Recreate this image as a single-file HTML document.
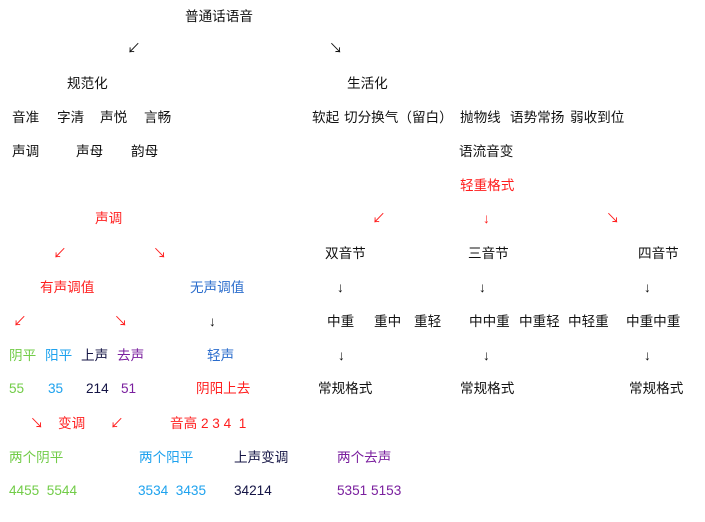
<!DOCTYPE html>
<html><head><meta charset="utf-8"><style>
body{margin:0;width:705px;height:522px;background:#fff;position:relative;overflow:hidden;font-family:"Liberation Sans","Noto Sans CJK SC",sans-serif;font-size:13.6px;color:#111;}
div{position:absolute;white-space:pre;line-height:16px;}
.r{color:#ff1e1e}.g{color:#72cc48}.b{color:#1ea2ee}.n{color:#141444}.p{color:#7a1f9e}.bl{color:#2a6ccc}
</style></head><body>
<div style="left:185px;top:9px">普通话语音</div>
<div style="left:127px;top:41px">↙</div><div style="left:329px;top:41px">↘</div>
<div style="left:67px;top:76px">规范化</div><div style="left:347px;top:76px">生活化</div>
<div style="left:12px;top:110px">音准</div><div style="left:57px;top:110px">字清</div><div style="left:100px;top:110px">声悦</div><div style="left:144px;top:110px">言畅</div>
<div style="left:312px;top:110px">软起</div><div style="left:344px;top:110px">切分换气（留白）</div><div style="left:460px;top:110px">抛物线</div><div style="left:510px;top:110px">语势常扬</div><div style="left:570px;top:110px">弱收到位</div>
<div style="left:12px;top:144px">声调</div><div style="left:76px;top:144px">声母</div><div style="left:131px;top:144px">韵母</div>
<div style="left:459px;top:144px">语流音变</div>
<div class="r" style="left:460px;top:178px">轻重格式</div>
<div class="r" style="left:95px;top:211px">声调</div>
<div class="r" style="left:372px;top:211px">↙</div><div class="r" style="left:483px;top:211px">↓</div><div class="r" style="left:606px;top:211px">↘</div>
<div class="r" style="left:53px;top:246px">↙</div><div class="r" style="left:153px;top:246px">↘</div>
<div style="left:325px;top:246px">双音节</div><div style="left:468px;top:246px">三音节</div><div style="left:638px;top:246px">四音节</div>
<div class="r" style="left:40px;top:280px">有声调值</div><div class="bl" style="left:190px;top:280px">无声调值</div>
<div style="left:337px;top:280px">↓</div><div style="left:479px;top:280px">↓</div><div style="left:644px;top:280px">↓</div>
<div class="r" style="left:13px;top:314px">↙</div><div class="r" style="left:114px;top:314px">↘</div><div style="left:209px;top:314px">↓</div>
<div style="left:327px;top:314px">中重</div><div style="left:374px;top:314px">重中</div><div style="left:414px;top:314px">重轻</div>
<div style="left:469px;top:314px">中中重</div><div style="left:519px;top:314px">中重轻</div><div style="left:568px;top:314px">中轻重</div><div style="left:626px;top:314px">中重中重</div>
<div class="g" style="left:9px;top:348px">阴平</div><div class="b" style="left:45px;top:348px">阳平</div><div class="n" style="left:81px;top:348px">上声</div><div class="p" style="left:117px;top:348px">去声</div>
<div class="bl" style="left:207px;top:348px">轻声</div>
<div style="left:338px;top:348px">↓</div><div style="left:483px;top:348px">↓</div><div style="left:644px;top:348px">↓</div>
<div class="g" style="left:9px;top:381px">55</div><div class="b" style="left:48px;top:381px">35</div><div class="n" style="left:86px;top:381px">214</div><div class="p" style="left:121px;top:381px">51</div>
<div class="r" style="left:196px;top:381px">阴阳上去</div>
<div style="left:318px;top:381px">常规格式</div><div style="left:460px;top:381px">常规格式</div><div style="left:629px;top:381px">常规格式</div>
<div class="r" style="left:30px;top:416px">↘</div><div class="r" style="left:58px;top:416px">变调</div><div class="r" style="left:110px;top:416px">↙</div>
<div class="r" style="left:170px;top:416px">音高 2 3 4  1</div>
<div class="g" style="left:9px;top:450px">两个阴平</div><div class="b" style="left:139px;top:450px">两个阳平</div><div class="n" style="left:234px;top:450px">上声变调</div><div class="p" style="left:337px;top:450px">两个去声</div>
<div class="g" style="left:9px;top:483px">4455  5544</div><div class="b" style="left:138px;top:483px">3534  3435</div><div class="n" style="left:234px;top:483px">34214</div><div class="p" style="left:337px;top:483px">5351 5153</div>
</body></html>
